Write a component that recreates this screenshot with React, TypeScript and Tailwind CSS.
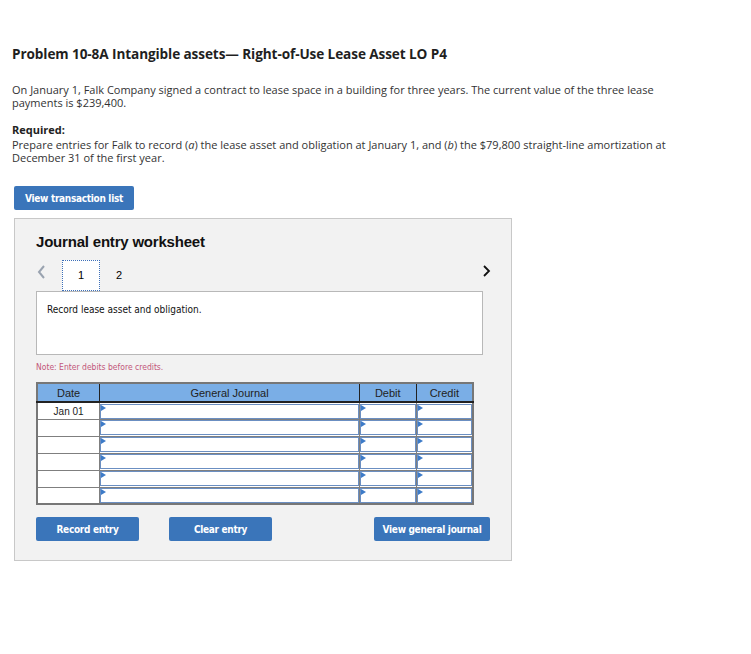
import React from 'react'

const rows = ['Jan 01', '', '', '', '', '']

const Marker = () => (
  <span className="absolute left-0 top-0 w-0 h-0 border-t-[3px] border-b-[3px] border-l-[5px] border-t-transparent border-b-transparent border-l-[#3d7bc8]" />
)

const InputCell = ({ w }: { w: string }) => (
  <td className={`${w} p-0 border border-[#7f7f7f] bg-white`}>
    <div className="relative h-[15px] border border-[#6b8fc2]">
      <Marker />
    </div>
  </td>
)

const Btn = ({ label, w }: { label: string; w: string }) => (
  <button
    className={`${w} block h-[24px] bg-[#3a75ba] text-white text-[10px] font-bold rounded-[2px] tracking-[-0.3px]`}
    style={{ fontFamily: '"DejaVu Sans Condensed", "Liberation Sans", sans-serif' }}
  >
    {label}
  </button>
)

const App: React.FC = () => {
  return (
    <div className="w-[751px] h-[654px] bg-white text-[#222]" style={{ fontFamily: '"Open Sans", Lato, sans-serif' }}>
      <div className="px-3 pt-[45px]">
        {/* Question */}
        <h1 className="text-[13.6px] font-bold text-[#1f1f1f] leading-[17px] tracking-[-0.1px]">
          Problem 10-8A Intangible assets— Right-of-Use Lease Asset LO P4
        </h1>
        <p className="mt-[21px] text-[11px] leading-[13px] text-[#333] pr-[60px]">
          On January 1, Falk Company signed a contract to lease space in a building for three years. The current value of the three lease payments is $239,400.
        </p>
        <p className="mt-[14px] text-[11px] leading-[13px] font-bold text-[#222]">Required:</p>
        <p className="mt-[2px] text-[11px] leading-[13px] text-[#333] pr-[60px]">
          Prepare entries for Falk to record (<span className="italic">a</span>) the lease asset and obligation at January 1, and (<span className="italic">b</span>) the $79,800 straight-line amortization at December 31 of the first year.
        </p>
      </div>

      <div className="pl-[14px] pt-[22px]">
        <Btn label="View transaction list" w="w-[120px]" />

        {/* Worksheet */}
        <div className="mt-[8px] w-[498px] h-[343px] bg-[#f2f2f2] border border-[#c8c8c8] px-[21px] pt-[12px]">
          <h2 className="text-[15px] font-bold text-[#111] tracking-[-0.2px]" style={{ fontFamily: '"Liberation Sans", Arial, sans-serif' }}>
            Journal entry worksheet
          </h2>

          <div className="mt-[6px] flex items-center h-[31px]">
            <svg width="26" height="31" viewBox="0 0 26 31" className="shrink-0">
              <path d="M8 6 L3 12 L8 18" fill="none" stroke="#9aa3b0" strokeWidth="2" />
            </svg>
            <div className="w-[38px] h-[31px] bg-white border border-dotted border-[#3d6fb8] flex items-center justify-center text-[11px] text-black" style={{ fontFamily: '"Liberation Sans", Arial, sans-serif' }}>
              1
            </div>
            <div className="w-[38px] h-[31px] flex items-center justify-center text-[11px] text-black" style={{ fontFamily: '"Liberation Sans", Arial, sans-serif' }}>
              2
            </div>
            <svg width="10" height="31" viewBox="0 0 10 31" className="ml-auto mr-[-1px] shrink-0">
              <path d="M3 6 L8 11 L3 16" fill="none" stroke="#111" strokeWidth="1.8" />
            </svg>
          </div>

          <div className="w-[447px] h-[64px] bg-white border border-[#b8b8b8] px-[10px] pt-[10px] text-[10px] text-[#111]" style={{ fontFamily: '"DejaVu Sans Condensed", Verdana, sans-serif' }}>
            Record lease asset and obligation.
          </div>

          <p className="mt-[6px] text-[8.5px] text-[#c2567a]" style={{ fontFamily: '"DejaVu Sans Condensed", Verdana, sans-serif' }}>
            Note: Enter debits before credits.
          </p>

          <table
            className="mt-[9px] w-[438px] border-collapse border-2 border-[#777] text-[11px]"
            style={{ fontFamily: '"Liberation Sans", Arial, sans-serif' }}
          >
            <thead>
              <tr className="h-[19px] bg-[#7aaee6] text-[#222]">
                <th className="w-[63px] font-normal border-r border-b-2 border-[#222]">Date</th>
                <th className="w-[261px] font-normal border-r border-b-2 border-[#222]">General Journal</th>
                <th className="w-[57px] font-normal border-r border-b-2 border-[#222]">Debit</th>
                <th className="w-[57px] font-normal border-b-2 border-[#222]">Credit</th>
              </tr>
            </thead>
            <tbody>
              {rows.map((d, i) => (
                <tr key={i} className="h-[17px]">
                  <td className="w-[63px] p-0 border border-[#7f7f7f] bg-white text-center text-[10px] text-[#222]">{d}</td>
                  <InputCell w="w-[261px]" />
                  <InputCell w="w-[57px]" />
                  <InputCell w="w-[57px]" />
                </tr>
              ))}
            </tbody>
          </table>

          <div className="mt-[12px] flex items-start">
            <Btn label="Record entry" w="w-[103px]" />
            <div className="w-[30px]" />
            <Btn label="Clear entry" w="w-[103px]" />
            <div className="ml-auto">
              <Btn label="View general journal" w="w-[116px]" />
            </div>
          </div>
        </div>
      </div>
    </div>
  )
}

export default App
